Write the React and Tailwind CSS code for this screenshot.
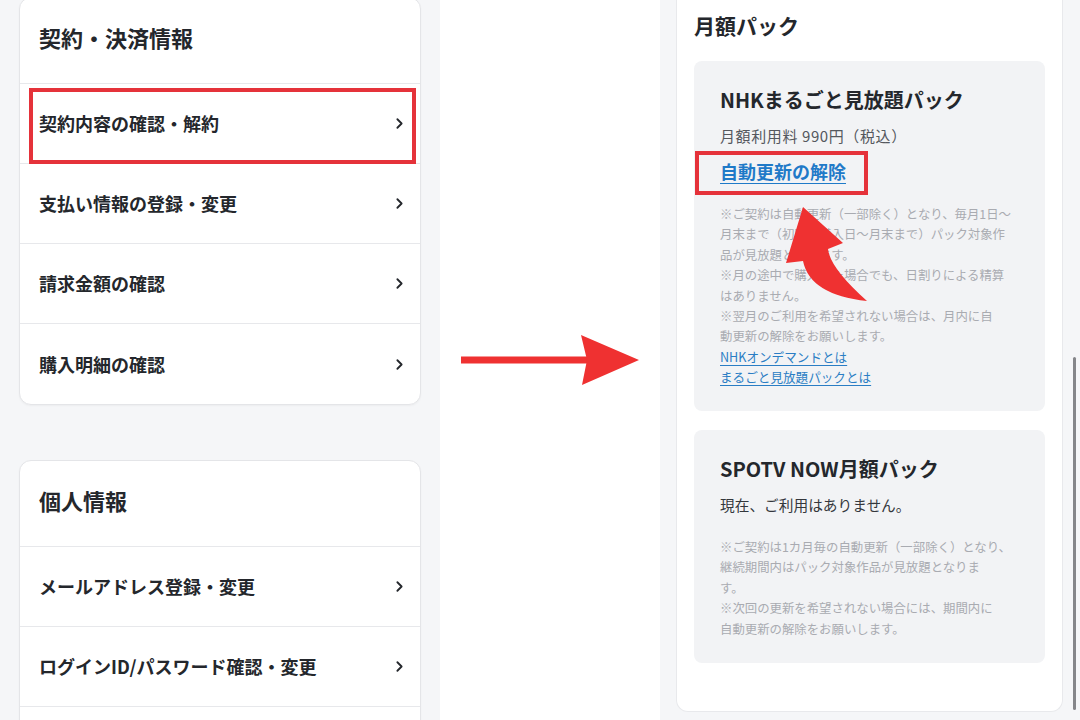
import React from 'react';
import { ChevronRight } from 'lucide-react';

const font = { fontFamily: '"Noto Sans CJK JP", "Noto Sans", sans-serif' };

function MenuRow({ label, highlight = false, last = false }) {
    return (
        <div className={`relative flex h-[80px] items-center justify-between pl-[19px] pr-[12px] ${last ? '' : 'border-b border-[#e7e8eb]'}`}>
            <span className="text-[18px] font-bold text-[#24272c]">{label}</span>
            {label && <ChevronRight className="h-[17px] w-[17px] text-[#24272c]" strokeWidth={2.6} />}
            {highlight && (
                <div className="absolute left-[9px] right-[4px] top-[4px] bottom-[-1px] border-[4px] border-[#e5323a]" />
            )}
        </div>
    );
}

function MenuCard({ title, rows, className = '' }) {
    return (
        <div className={`rounded-xl border border-[#e4e5e8] bg-white shadow-[0_1px_2px_rgba(0,0,0,0.04)] ${className}`}>
            <div className="flex h-[86px] items-center border-b border-[#e7e8eb] pb-[6px] pl-[19px]">
                <h2 className="text-[22px] font-bold text-[#24272c]">{title}</h2>
            </div>
            {rows.map((row, i) => (
                <MenuRow key={i} label={row.label} highlight={row.highlight} last={i === rows.length - 1 && row.last} />
            ))}
        </div>
    );
}

function LeftPanel() {
    return (
        <div className="h-[720px] w-[440px] shrink-0 overflow-hidden bg-[#f5f6f8] px-[19px]">
            <MenuCard
                className="-mt-[3px]"
                title="契約・決済情報"
                rows={[
                    { label: '契約内容の確認・解約', highlight: true },
                    { label: '支払い情報の登録・変更' },
                    { label: '請求金額の確認' },
                    { label: '購入明細の確認', last: true },
                ]}
            />
            <MenuCard
                className="mt-[55px]"
                title="個人情報"
                rows={[
                    { label: 'メールアドレス登録・変更' },
                    { label: 'ログインID/パスワード確認・変更' },
                    { label: '' },
                ]}
            />
        </div>
    );
}

function MiddleArrow() {
    return (
        <div className="flex h-[720px] w-[220px] shrink-0 items-center bg-white">
            <svg width="220" height="60" viewBox="0 0 220 60">
                <rect x="21" y="26.5" width="130" height="7" fill="#ef3131" />
                <polygon points="141,5 199,30 142,55 147,30" fill="#ef3131" />
            </svg>
        </div>
    );
}

function RightPanel() {
    const noteClass = 'text-[12.4px] leading-[20.4px] text-[#a9abb1]';
    const linkClass = 'text-[12.6px] leading-[20.4px] text-[#2a7dc4] underline decoration-1 underline-offset-[3px]';

    return (
        <div className="relative h-[720px] w-[420px] shrink-0 overflow-hidden bg-[#f5f6f8] pl-[16px] pr-[17px]">
            <div className="rounded-b-xl border-x border-b border-[#e8e9ec] bg-white px-[17px] pt-[10px] pb-[48px]">
                <h2 className="text-[21px] font-bold leading-[30px] text-[#24272c]">月額パック</h2>

                {/* NHK pack */}
                <div className="mt-[21px] h-[350px] rounded-lg bg-[#f2f3f5] px-[26px] pt-[25px]">
                    <h3 className="text-[20px] font-bold leading-[28px] text-[#24272c]">NHKまるごと見放題パック</h3>
                    <p className="mt-[11px] text-[15px] leading-[22px] tracking-[0.6px] text-[#55585e]">月額利用料 990円（税込）</p>
                    <div className="relative mt-[12px] inline-block">
                        <span className="text-[18px] font-bold leading-[24px] text-[#1f7ac8] underline decoration-1 underline-offset-[4px]">
                            自動更新の解除
                        </span>
                        <div className="absolute left-[-25px] right-[-22px] top-[-8px] bottom-[-11px] border-[4px] border-[#e5323a]" />
                    </div>
                    <div className={`mt-[20px] ${noteClass}`}>
                        ※ご契約は自動更新（一部除く）となり、毎月1日～<br />
                        月末まで（初回は購入日～月末まで）パック対象作<br />
                        品が見放題となります。<br />
                        ※月の途中で購入した場合でも、日割りによる精算<br />
                        はありません。<br />
                        ※翌月のご利用を希望されない場合は、月内に自<br />
                        動更新の解除をお願いします。
                    </div>
                    <div className="flex flex-col items-start">
                        <span className={linkClass}>NHKオンデマンドとは</span>
                        <span className={linkClass}>まるごと見放題パックとは</span>
                    </div>
                </div>

                {/* SPOTV pack */}
                <div className="mt-[19px] h-[233px] rounded-lg bg-[#f2f3f5] px-[26px] pt-[25px]">
                    <h3 className="text-[20px] font-bold leading-[28px] text-[#24272c]">SPOTV NOW月額パック</h3>
                    <p className="mt-[11px] text-[14.7px] leading-[22px] text-[#34373c]">現在、ご利用はありません。</p>
                    <div className={`mt-[21px] ${noteClass}`}>
                        ※ご契約は1カ月毎の自動更新（一部除く）となり、<br />
                        継続期間内はパック対象作品が見放題となりま<br />
                        す。<br />
                        ※次回の更新を希望されない場合には、期間内に<br />
                        自動更新の解除をお願いします。
                    </div>
                </div>
            </div>

            {/* scrollbar */}
            <div className="absolute left-[413px] top-[357px] h-[353px] w-[3px] rounded-full bg-[#85868a]" />

            {/* curved annotation arrow */}
            <svg className="pointer-events-none absolute left-0 top-0" width="420" height="720" viewBox="0 0 420 720">
                <path
                    d="M143,207 L183,243 L168,249 Q170,268 207,301 Q150,295 143,261 L126,263 Z"
                    fill="#ef3131"
                />
            </svg>
        </div>
    );
}

export default function App() {
    return (
        <div className="flex h-[720px] w-[1080px] overflow-hidden" style={font}>
            <LeftPanel />
            <MiddleArrow />
            <RightPanel />
        </div>
    );
}
